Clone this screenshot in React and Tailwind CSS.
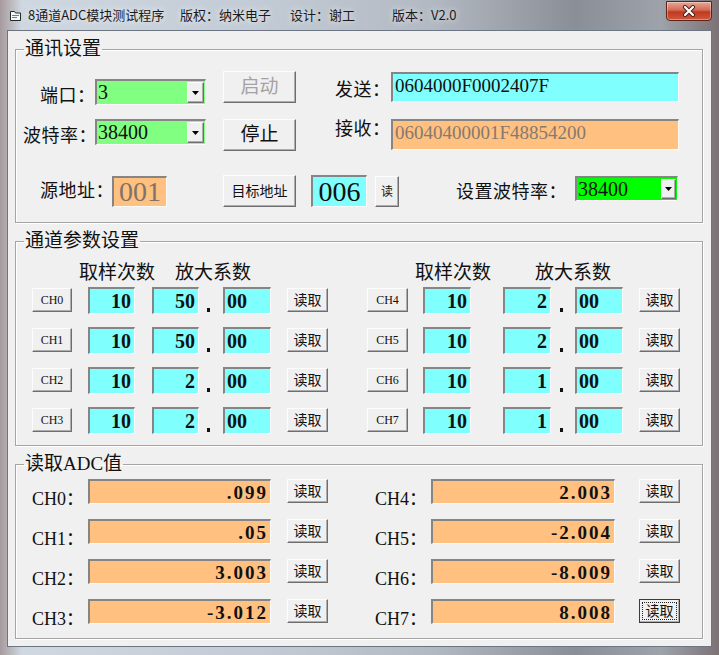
import React from "react";

const cn = (...a) => a.filter(Boolean).join(" ");

const serif = "font-['Liberation_Serif','Noto_Sans_CJK_SC',serif]";
const sunken =
  "border-t-2 border-l-2 border-r border-b border-t-[#858585] border-l-[#858585] border-r-[#fbfbfb] border-b-[#fbfbfb]";
const raised =
  "border border-t-[#fdfdfd] border-l-[#fdfdfd] border-r-[#6e6e6e] border-b-[#6e6e6e] bg-[#f0f0f0] shadow-[inset_-1px_-1px_0_#adadad]";
const label = "text-[18px] leading-[20px] tracking-[0.5px] whitespace-nowrap";

function Group({ title, className, children }) {
  return (
    <fieldset
      className={cn(
        "ml-[7px] w-[688px] border border-[#a5a5a5] shadow-[inset_1px_1px_0_#fff,1px_1px_0_#fff]",
        className
      )}
    >
      <legend className="ml-[8px] px-[1px] text-[19px] leading-[20px] text-[#111]">
        {title}
      </legend>
      {children}
    </fieldset>
  );
}

function Btn({ className, children }) {
  return (
    <div className={cn(raised, "flex items-center justify-center shrink-0", className)}>
      {children}
    </div>
  );
}

function Arrow() {
  return (
    <svg width="7" height="4" viewBox="0 0 7 4">
      <polygon points="0,0 7,0 3.5,4" fill="#000" />
    </svg>
  );
}

function Combo({ value, className, bg, btn = "w-[17px]" }) {
  return (
    <div className={cn("flex shrink-0", sunken, bg, className)}>
      <div className="flex-1 pl-[1px] pt-[1px] text-[20px] leading-[20px] text-[#111]">
        {value}
      </div>
      <div className={cn(raised, btn, "my-[1px] mr-[1px] flex items-center justify-center")}>
        <Arrow />
      </div>
    </div>
  );
}

function Box({ className, children }) {
  return <div className={cn(sunken, "shrink-0 flex items-center", className)}>{children}</div>;
}

function Dot({ pl }) {
  return (
    <div className={cn("w-[24px] h-full flex items-end pb-[2px] shrink-0", pl)}>
      <div className="w-[3px] h-[4px] bg-[#111]" />
    </div>
  );
}

const params = [
  ["CH0", "10", "50", "CH4", "10", "2"],
  ["CH1", "10", "50", "CH5", "10", "2"],
  ["CH2", "10", "2", "CH6", "10", "1"],
  ["CH3", "10", "2", "CH7", "10", "1"],
];

const adc = [
  ["CH0", ".099", "CH4", "2.003"],
  ["CH1", ".05", "CH5", "-2.004"],
  ["CH2", "3.003", "CH6", "-8.009"],
  ["CH3", "-3.012", "CH7", "8.008"],
];

const cyan = "bg-[#80ffff]";
const orange = "bg-[#ffc080]";
const num = "text-[20px] font-bold text-[#111] leading-none";

export default function App() {
  return (
    <div
      className={cn(
        "w-[719px] h-[655px] overflow-hidden flex flex-col",
        "bg-[linear-gradient(90deg,#a69a9c_0%,#cfd7e0_3%,#c3ccd6_35%,#b3b9c2_60%,#8a8e97_80%,#9ea2aa_92%,#7c7275_100%)]",
        serif
      )}
    >
      {/* title bar */}
      <div className="h-[30px] flex items-start shrink-0">
        <svg className="ml-[9px] mt-[9px] shrink-0" width="13" height="13" viewBox="0 0 13 13">
          <path d="M1.5 2.5h4l1 1.5h5v7.5h-10z" fill="#f6faf7" stroke="#1d2a2a" />
          <rect x="3" y="6" width="7" height="1" fill="#4e8f89" />
          <rect x="3" y="8" width="5" height="1" fill="#4e8f89" />
        </svg>
        <div className="ml-[6px] mt-[6px] flex text-[13px] leading-[18px] text-[#1b1b1b] font-['Noto_Sans_CJK_SC',sans-serif] [text-shadow:0_0_6px_rgba(255,255,255,0.9)] whitespace-nowrap">
          <span className="w-[152px]">8通道ADC模块测试程序</span>
          <span className="w-[110px]">版权：纳米电子</span>
          <span className="w-[102px]">设计：谢工</span>
          <span>版本：V2.0</span>
        </div>
        <div className="ml-auto mr-[7px] mt-[1px] w-[46px] h-[20px] rounded-b-[4px] border border-[#5e241a] bg-[linear-gradient(180deg,#e7a896_0%,#d46a54_45%,#c0391f_55%,#d0583c_100%)] shadow-[inset_0_0_0_1px_rgba(255,255,255,0.35)] flex items-center justify-center shrink-0">
          <svg width="14" height="12" viewBox="0 0 14 12">
            <path d="M3 2l8 8M11 2l-8 8" stroke="#4a1d16" strokeWidth="4" strokeLinecap="round" />
            <path d="M3 2l8 8M11 2l-8 8" stroke="#fff" strokeWidth="2.2" strokeLinecap="round" />
          </svg>
        </div>
      </div>

      {/* client area */}
      <div className="mx-[7px] h-[617px] bg-[#f0f0f0] border border-[#6c7682] flex flex-col shrink-0 text-[#111]">
        {/* 通讯设置 */}
        <Group title="通讯设置" className="mt-[8px] h-[184px]">
          <div className="mt-[12px] h-[34px] flex items-start">
            <div className={cn("ml-[24px] w-[55px] mt-[15px]", label)}>端口：</div>
            <Combo value="3" bg="bg-[#80ff80]" className="relative w-[111px] h-[26px] mt-[8px]" />
            <Btn className="ml-[17px] w-[73px] h-[32px] text-[19px] text-[#a3a3a3]">启动</Btn>
            <div className={cn("ml-[39px] w-[56px] mt-[9px]", label)}>发送：</div>
            <Box className={cn(cyan, "w-[288px] h-[30px] mt-[1px] !items-start pl-[2px] pt-[1px]")}>
              <span className="text-[19px] leading-[22px]">0604000F0002407F</span>
            </Box>
          </div>

          <div className="mt-[14px] h-[32px] flex items-start">
            <div className={cn("ml-[7px] w-[72px] mt-[7px]", label)}>波特率：</div>
            <Combo value="38400" bg="bg-[#80ff80]" className="relative w-[111px] h-[26px]" />
            <Btn className="ml-[17px] w-[73px] h-[32px] text-[19px]">停止</Btn>
            <div className={cn("ml-[39px] w-[56px] mt-[0px]", label)}>接收：</div>
            <Box className={cn(orange, "w-[288px] h-[31px] !items-start pl-[2px] pt-[1px]")}>
              <span className="text-[19px] leading-[22px] text-[#857a70]">06040400001F48854200</span>
            </Box>
          </div>

          <div className="mt-[24px] h-[32px] flex items-start">
            <div className={cn("ml-[24px] w-[72px] mt-[6px]", label)}>源地址：</div>
            <Box className={cn(orange, "relative w-[55px] h-[31px] mt-[1px] justify-center")}>
              <span className="text-[28px] leading-none text-[#7d7468]">001</span>
            </Box>
            <Btn className="ml-[56px] w-[73px] h-[32px] text-[14px]">目标地址</Btn>
            <Box className={cn(cyan, "ml-[15px] w-[56px] h-[32px] justify-center")}>
              <span className="text-[28px] leading-none text-[#111]">006</span>
            </Box>
            <Btn className="ml-[8px] w-[24px] h-[31px] mt-[1px] text-[12px]">读</Btn>
            <div className={cn("ml-[57px] w-[119px] mt-[7px]", label)}>设置波特率：</div>
            <Combo
              value="38400"
              bg="bg-[#00ff00]"
              btn="w-[15px]"
              className="relative w-[103px] h-[25px] mt-[1px]"
            />
          </div>
        </Group>

        {/* 通道参数设置 */}
        <Group title="通道参数设置" className="mt-[8px] h-[215px]">
          <div className="mt-[12px] h-[20px] flex text-[19px] leading-[20px] whitespace-nowrap">
            <span className="ml-[63px] w-[80px]">取样次数</span>
            <span className="ml-[16px] w-[80px]">放大系数</span>
            <span className="ml-[160px] w-[80px]">取样次数</span>
            <span className="ml-[40px] w-[80px]">放大系数</span>
          </div>
          <div className="mt-[4px] flex flex-col gap-[13px]">
            {params.map((r) => (
              <div key={r[0]} className="h-[27px] flex items-start">
                <Btn className="ml-[16px] w-[40px] h-[24px] mt-[1px] text-[12px]">{r[0]}</Btn>
                <Box className={cn(cyan, "ml-[16px] w-[47px] h-[27px] justify-end pr-[3px]")}>
                  <span className={num}>{r[1]}</span>
                </Box>
                <Box className={cn(cyan, "ml-[17px] w-[47px] h-[27px] justify-end pr-[3px]")}>
                  <span className={num}>{r[2]}</span>
                </Box>
                <Dot pl="pl-[8px]" />
                <Box className={cn(cyan, "w-[48px] h-[27px] pl-[2px]")}>
                  <span className={num}>00</span>
                </Box>
                <Btn className="ml-[16px] w-[41px] h-[24px] mt-[1px] text-[14px]">读取</Btn>

                <Btn className="ml-[39px] w-[41px] h-[24px] mt-[1px] text-[12px]">{r[3]}</Btn>
                <Box className={cn(cyan, "ml-[15px] w-[48px] h-[27px] justify-end pr-[3px]")}>
                  <span className={num}>{r[4]}</span>
                </Box>
                <Box className={cn(cyan, "ml-[32px] w-[48px] h-[27px] justify-end pr-[3px]")}>
                  <span className={num}>{r[5]}</span>
                </Box>
                <Dot pl="pl-[9px]" />
                <Box className={cn(cyan, "w-[48px] h-[27px] pl-[2px]")}>
                  <span className={num}>00</span>
                </Box>
                <Btn className="ml-[16px] w-[41px] h-[24px] mt-[1px] text-[14px]">读取</Btn>
              </div>
            ))}
          </div>
        </Group>

        {/* 读取ADC值 */}
        <Group title="读取ADC值" className="mt-[8px] h-[185px]">
          <div className="mt-[5px] flex flex-col gap-[15px]">
            {adc.map((r, i) => (
              <div key={r[0]} className="h-[25px] flex items-start">
                <div className="ml-[16px] w-[56px] mt-[10px] text-[18px] leading-[20px] whitespace-nowrap">
                  {r[0]}：
                </div>
                <Box className={cn(orange, "relative w-[183px] h-[25px] justify-end pr-[2px]")}>
                  <span className="text-[19px] font-bold tracking-[2px] leading-none">{r[1]}</span>
                </Box>
                <Btn className="ml-[16px] w-[41px] h-[24px] text-[14px]">读取</Btn>
                <div className="ml-[47px] w-[56px] mt-[10px] text-[18px] leading-[20px] whitespace-nowrap">
                  {r[2]}：
                </div>
                <Box className={cn(orange, "relative w-[184px] h-[25px] justify-end pr-[2px]")}>
                  <span className="text-[19px] font-bold tracking-[2px] leading-none">{r[3]}</span>
                </Box>
                <Btn
                  className={cn(
                    "ml-[24px] w-[41px] h-[24px] text-[14px]",
                    i === 3 && "!border-[#3c3c3c] outline outline-1 outline-dotted outline-[#222] -outline-offset-[4px]"
                  )}
                >
                  读取
                </Btn>
              </div>
            ))}
          </div>
        </Group>
      </div>
    </div>
  );
}
